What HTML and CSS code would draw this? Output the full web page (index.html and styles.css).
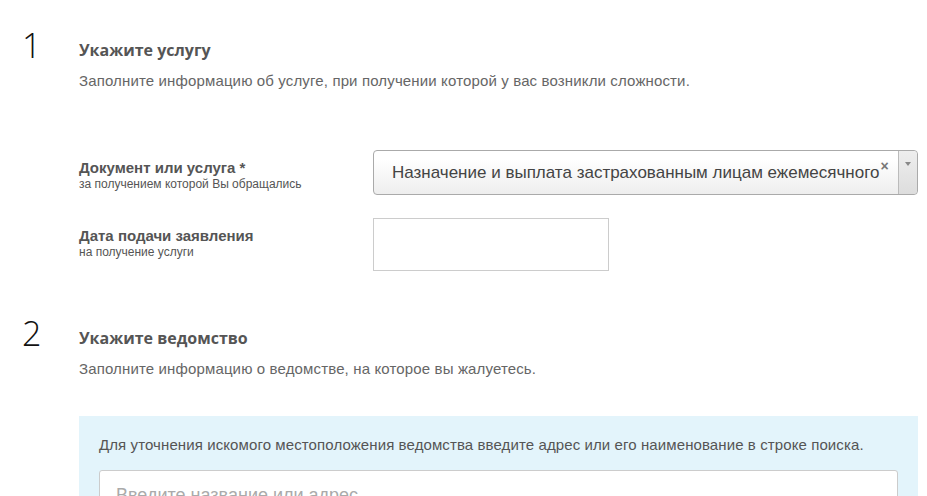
FILE: index.html
```html
<!DOCTYPE html>
<html lang="ru">
<head>
<meta charset="utf-8">
<title>Жалоба</title>
<link rel="stylesheet" href="styles.css">
</head>
<body>
<div class="wrapper">
	<!--step 1-->
	<div class="step">
		<div class="step-num">1</div>
		<div class="step-body">
			<h2>Укажите услугу</h2>
			<p class="step-desc">Заполните информацию об услуге, при получении которой у вас возникли сложности.</p>
			<div class="form-row row-service">
				<div class="label">
					<b>Документ или услуга *</b>
					<span>за получением которой Вы обращались</span>
				</div>
				<div class="select">
					<span class="select-text">Назначение и выплата застрахованным лицам ежемесячного</span>
					<span class="select-clear">×</span>
					<span class="select-arrow"></span>
				</div>
			</div>
			<div class="form-row row-date">
				<div class="label">
					<b>Дата подачи заявления</b>
					<span>на получение услуги</span>
				</div>
				<div class="date-input"></div>
			</div>
		</div>
	</div>
	<!--step 2-->
	<div class="step step2">
		<div class="step-num">2</div>
		<div class="step-body">
			<h2>Укажите ведомство</h2>
			<p class="step-desc">Заполните информацию о ведомстве, на которое вы жалуетесь.</p>
			<div class="search-box">
				<p>Для уточнения искомого местоположения ведомства введите адрес или его наименование в строке поиска.</p>
				<div class="search-input">Введите название или адрес</div>
			</div>
		</div>
	</div>
</div>
</body>
</html>
```
FILE: styles.css
```css
html,body,div,h2,p,span,b{margin:0;padding:0;}
body{background:#fff;font:15px "Liberation Sans",Arial,sans-serif;color:#555;overflow:hidden;}
/*layout*/
.wrapper{width:896px;padding:0 0 0 22px;}
.step{display:flex;padding-top:28px;}
.step2{padding-top:45px;}
.step-num{width:57px;flex:none;font:300 34px/34px "Open Sans",sans-serif;color:#111;}
.step-body{width:839px;}
/*title*/
.step-body h2{font:700 16px/20px "Open Sans",sans-serif;color:#555;padding-top:12px;}
.step-desc{font-size:15px;line-height:20px;letter-spacing:0.14px;color:#666;margin-top:11px;}
/*form*/
.form-row{display:flex;}
.row-service{margin-top:59px;}
.row-date{margin-top:23px;}
.label{width:294px;flex:none;padding-top:9px;}
	.label b{display:block;font-size:15px;line-height:17px;color:#555;}
	.label span{display:block;font-size:12px;line-height:14px;color:#555;margin-top:1px;}
.select{width:545px;height:45px;box-sizing:border-box;border:1px solid #aaa;border-radius:4px;background:linear-gradient(#fff 20%,#eee);display:flex;align-items:center;}
	.select-text{font-size:17px;color:#444;padding-left:18px;white-space:nowrap;}
	.select-clear{font:bold 14px/1 "Liberation Sans",Arial,sans-serif;color:#777;align-self:flex-start;margin:8px 0 0 1px;}
	.select-arrow{margin-left:auto;width:18px;height:100%;border-left:1px solid #bbb;background:linear-gradient(#eee,#ddd);border-radius:0 4px 4px 0;position:relative;}
	.select-arrow:after{content:"";position:absolute;left:6px;top:11px;border:3px solid transparent;border-top:4px solid #888;}
.date-input{width:236px;height:53px;box-sizing:border-box;border:1px solid #ccc;background:#fff;}
/*search*/
.search-box{margin-top:37px;background:#e3f4fb;padding:20px 20px 0;height:100px;}
	.search-box p{font:15px/18px "Liberation Sans",sans-serif;letter-spacing:0.1px;color:#555;}
	.search-input{margin-top:16px;height:60px;background:#fff;border:1px solid #ccc;border-radius:3px;font-size:18px;color:#aaa;padding:14px 16px;box-sizing:border-box;}
```
